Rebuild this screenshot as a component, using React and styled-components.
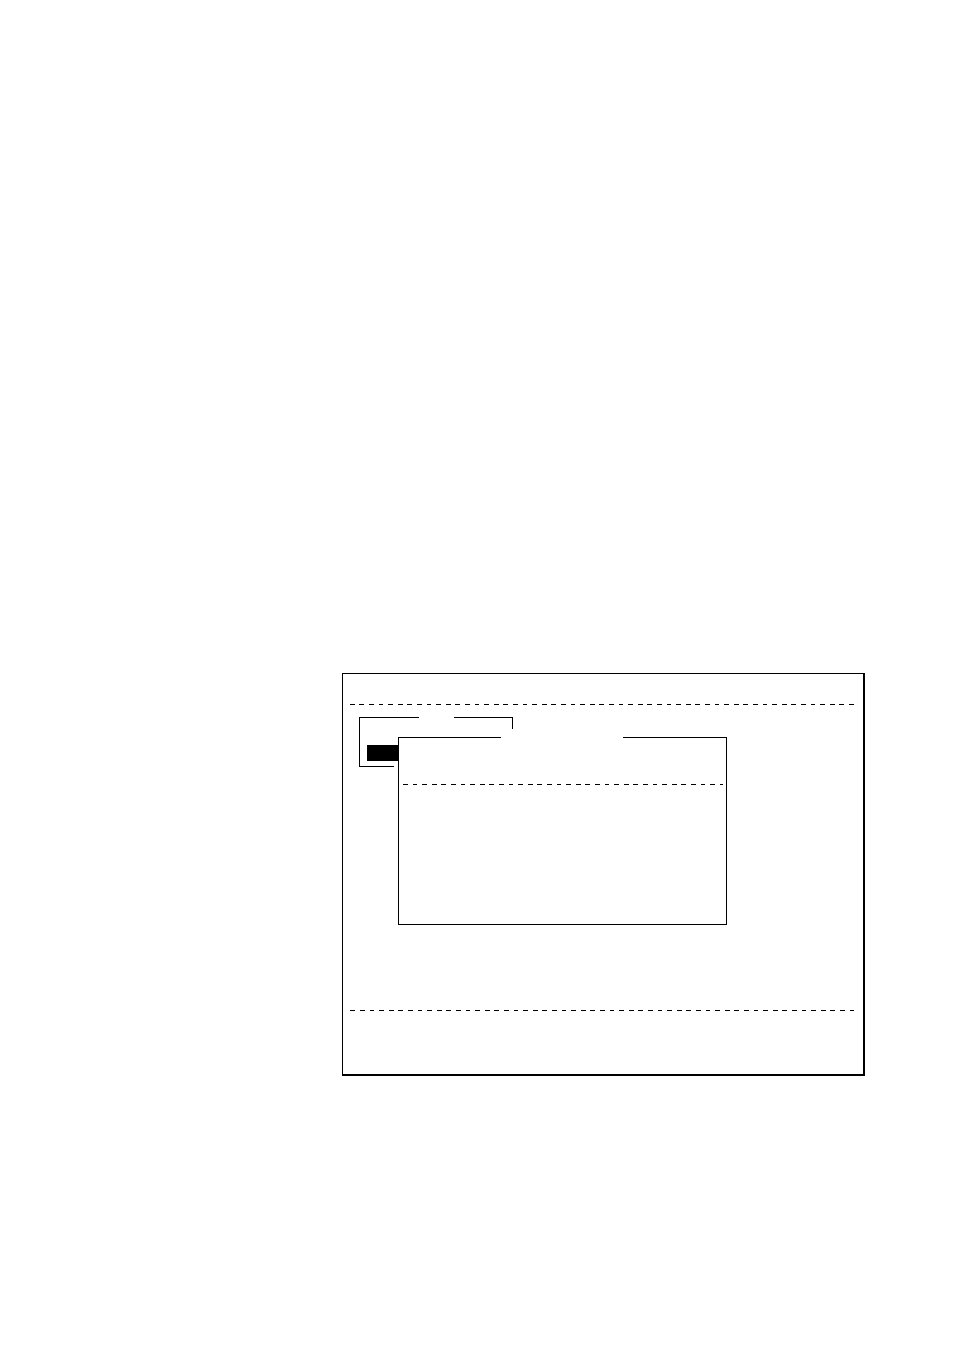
import React from "react";
import styled, { createGlobalStyle } from "styled-components";

const GlobalStyle = createGlobalStyle`
  * { box-sizing: border-box; }
  body {
    margin: 0;
    background: #fff;
    color: #000;
    font-family: "Liberation Mono", monospace;
  }
`;

const Page = styled.main`
  min-height: 100vh;
  padding: 673px 89px 0 342px;
`;

const Screen = styled.section`
  display: flex;
  flex-direction: column;
  border: 1px solid #000;
  border-right-width: 2px;
  border-bottom-width: 2px;
`;

const HeaderBar = styled.header`
  height: 30px;
`;

const FooterBar = styled.footer`
  height: 63px;
`;

/* Five dashes per 48px tile; $shift moves the start of the pattern. */
const DashedRule = styled.hr`
  height: 1px;
  margin: 0 ${(p) => p.$end}px 0 ${(p) => p.$start}px;
  border: 0;
  background-image: linear-gradient(
    to right,
    #000 0 5px, transparent 5px 9px,
    #000 9px 14px, transparent 14px 19px,
    #000 19px 24px, transparent 24px 29px,
    #000 29px 33px, transparent 33px 38px,
    #000 38px 43px, transparent 43px 48px
  );
  background-size: 48px 1px;
  background-position-x: ${(p) => p.$shift || 0}px;
`;

const Workspace = styled.div`
  position: relative;
  height: 305px;
  padding: 12px 16px;
`;

const MenuPanel = styled.nav`
  width: 154px;
  height: 50px;
  border: 1px solid #000;
  border-top: 0;
`;

const TitleLine = styled.div`
  display: grid;
  grid-template-columns: ${(p) => p.$columns};
  height: 1px;

  &::before,
  &::after {
    content: "";
    background: #000;
  }

  &::after {
    grid-column: 3;
  }
`;

const SelectedRow = styled.div`
  position: relative;
  z-index: 2;
  width: 31px;
  height: 16px;
  margin: 27px 0 0 7px;
  background: #000;
`;

/* The white margin around the dialog hides part of the menu behind it. */
const DialogLayer = styled.div`
  position: absolute;
  z-index: 1;
  top: 24px;
  left: 51px;
  right: 136px;
  padding: 8px 0 0 4px;
  background: #fff;
`;

const Dialog = styled.section`
  height: 188px;
  border: 1px solid #000;
  border-top: 0;
`;

const DialogHeader = styled.header`
  height: 46px;
`;

export default function App() {
  return (
    <>
      <GlobalStyle />
      <Page>
        <Screen>
          <HeaderBar />
          <DashedRule $start={7} $end={8} />
          <Workspace>
            <MenuPanel>
              <TitleLine $columns="59px 35px 1fr" />
              <SelectedRow />
            </MenuPanel>
            <DialogLayer>
              <Dialog>
                <TitleLine $columns="102px 122px 1fr" />
                <DialogHeader />
                <DashedRule $start={4} $end={3} $shift={-19} />
              </Dialog>
            </DialogLayer>
          </Workspace>
          <DashedRule $start={7} $end={8} $shift={-9} />
          <FooterBar />
        </Screen>
      </Page>
    </>
  );
}
